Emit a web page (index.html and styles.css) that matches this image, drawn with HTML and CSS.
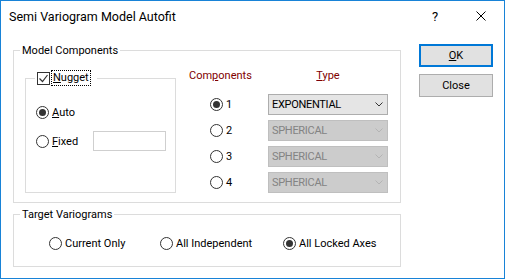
FILE: index.html
```html
<!DOCTYPE html>
<html lang="en">
<head>
    <meta charset="UTF-8">
    <title>Semi Variogram Model Autofit</title>
    <link rel="stylesheet" href="styles.css">
</head>
<body>

    <div class="dialog">
        <div class="titlebar">
            <span class="title">Semi Variogram Model Autofit</span>
            <span class="cap-btn help">?</span>
            <span class="cap-btn">
                <svg width="10" height="10" viewBox="0 0 10 10"><path d="M0.5 0.5 L9.5 9.5 M9.5 0.5 L0.5 9.5" stroke="#000" stroke-width="1" fill="none"/></svg>
            </span>
        </div>

        <div class="content">
            <div class="groups">
                <fieldset class="group model">
                    <legend>Model Components</legend>
                    <div class="model-body">
                        <fieldset class="group nugget">
                            <legend>
                                <span class="legend-row">
                                    <span class="check">
                                        <svg width="11" height="11" viewBox="0 0 11 11"><path d="M1.5 5.5 L4.5 8.5 L9.5 2" stroke="#333" stroke-width="1.2" fill="none"/></svg>
                                    </span>
                                    <span class="focus"><u>N</u>ugget</span>
                                </span>
                            </legend>
                            <div class="opt">
                                <span class="radio on"></span>
                                <span class="opt-label"><u>A</u>uto</span>
                            </div>
                            <div class="opt fixed">
                                <span class="radio"></span>
                                <span class="opt-label"><u>F</u>ixed</span>
                                <span class="textbox"></span>
                            </div>
                        </fieldset>

                        <div class="components">
                            <div class="col-head">Com<u>p</u>onents</div>
                            <div class="col-head type"><u>T</u>ype</div>

                            <div class="comp-radio"><span class="radio on"></span>1</div>
                            <div class="combo">EXPONENTIAL<svg width="8" height="5" viewBox="0 0 8 5"><path d="M0.5 0.5 L4 4 L7.5 0.5" stroke="#333" fill="none"/></svg></div>

                            <div class="comp-radio"><span class="radio"></span>2</div>
                            <div class="combo disabled">SPHERICAL<svg width="8" height="5" viewBox="0 0 8 5"><path d="M0.5 0.5 L4 4 L7.5 0.5" stroke="#b4b4b4" fill="none"/></svg></div>

                            <div class="comp-radio"><span class="radio"></span>3</div>
                            <div class="combo disabled">SPHERICAL<svg width="8" height="5" viewBox="0 0 8 5"><path d="M0.5 0.5 L4 4 L7.5 0.5" stroke="#b4b4b4" fill="none"/></svg></div>

                            <div class="comp-radio"><span class="radio"></span>4</div>
                            <div class="combo disabled">SPHERICAL<svg width="8" height="5" viewBox="0 0 8 5"><path d="M0.5 0.5 L4 4 L7.5 0.5" stroke="#b4b4b4" fill="none"/></svg></div>
                        </div>
                    </div>
                </fieldset>

                <fieldset class="group target">
                    <legend>Target Variograms</legend>
                    <div class="target-row">
                        <div class="target-opt first"><span class="radio"></span>Current Only</div>
                        <div class="target-opt second"><span class="radio"></span>All Independent</div>
                        <div class="target-opt"><span class="radio on"></span>All Locked Axes</div>
                    </div>
                </fieldset>
            </div>

            <div class="buttons">
                <button class="btn default"><u>O</u>K</button>
                <button class="btn">Close</button>
            </div>
        </div>
    </div>

</body>
</html>
```

FILE: styles.css
```css
body {
    margin: 0;
    font-family: Roboto, 'Liberation Sans', sans-serif;
    font-size: 11px;
    color: #000;
    background: #fff;
}

.dialog {
    width: 505px;
    height: 279px;
    box-sizing: border-box;
    border: 1px solid #1883d7;
    background: #fff;
}

.titlebar {
    display: flex;
    align-items: center;
    height: 30px;
    padding-left: 8px;
    font-size: 12.5px;
}

.title {
    flex: 1;
}

.cap-btn {
    width: 46px;
    height: 30px;
    display: flex;
    align-items: center;
    justify-content: center;
}

.help {
    font-size: 13px;
}

.content {
    display: flex;
    padding: 12px 0 0 12px;
}

.groups {
    width: 388px;
}

.group {
    margin: 0;
    padding: 0;
    min-width: 0;
    border: 1px solid #dcdcdc;
}

.group > legend {
    margin-left: 6px;
    padding: 0 2px;
    line-height: 15px;
}

.model-body {
    display: flex;
    align-items: flex-start;
}

/* nugget sub group */
.group.nugget {
    width: 151px;
    flex-shrink: 0;
    box-sizing: border-box;
    margin: 12px 0 9px 11px;
    padding: 16px 0 41px 0;
}

.group.nugget > legend {
    margin-left: 9px;
    padding: 0 6px 0 2px;
    line-height: 16px;
}

.legend-row {
    display: flex;
    align-items: center;
    height: 16px;
}

.check {
    width: 11px;
    height: 11px;
    border: 1px solid #333;
    display: flex;
    margin-right: 1px;
}

.focus {
    height: 14px;
    line-height: 14px;
    padding: 0 1px;
    border: 1px dotted #000;
}

.opt {
    display: flex;
    align-items: center;
    height: 20px;
    padding-left: 10px;
}

.opt.fixed {
    margin-top: 9px;
}

.opt-label {
    width: 41px;
}

.radio {
    width: 11px;
    height: 11px;
    border: 1px solid #333;
    border-radius: 50%;
    margin-right: 3px;
    display: flex;
    align-items: center;
    justify-content: center;
    flex-shrink: 0;
}

.radio.on::after {
    content: '';
    width: 7px;
    height: 7px;
    border-radius: 50%;
    background: #333;
}

.textbox {
    width: 73px;
    height: 20px;
    box-sizing: border-box;
    border: 1px solid #cfcfcf;
}

/* components / type grid */
.components {
    display: grid;
    grid-template-columns: 79px 120px;
    grid-auto-rows: 21px;
    row-gap: 5px;
    margin: 10px 0 0 13px;
}

.col-head {
    height: 15px;
    line-height: 15px;
    color: #800000;
    margin-bottom: 3px;
}

.col-head.type {
    text-align: center;
}

.comp-radio {
    display: flex;
    align-items: center;
    padding-left: 21px;
}

.combo {
    display: flex;
    align-items: center;
    justify-content: space-between;
    box-sizing: border-box;
    height: 21px;
    padding: 0 4px 0 3px;
    border: 1px solid #adadad;
    background: #e5e5e5;
    letter-spacing: -0.3px;
}

.combo.disabled {
    background: #cccccc;
    border-color: #bfbfbf;
    color: #838383;
}

/* target group */
.group.target {
    margin-top: 4px;
    padding: 13px 0 15px 0;
}

.target-row {
    display: flex;
    align-items: center;
    height: 16px;
    padding-left: 35px;
}

.target-opt {
    display: flex;
    align-items: center;
}

.target-opt.first {
    width: 111px;
}

.target-opt.second {
    width: 123px;
}

/* buttons */
.buttons {
    display: flex;
    flex-direction: column;
    gap: 7px;
    margin: 1px 0 0 18px;
}

.btn {
    width: 74px;
    height: 23px;
    padding: 0;
    font-family: inherit;
    font-size: 11px;
    color: #000;
    background: #e1e1e1;
    border: 1px solid #adadad;
}

.btn.default {
    border: 2px solid #0078d7;
}
```
